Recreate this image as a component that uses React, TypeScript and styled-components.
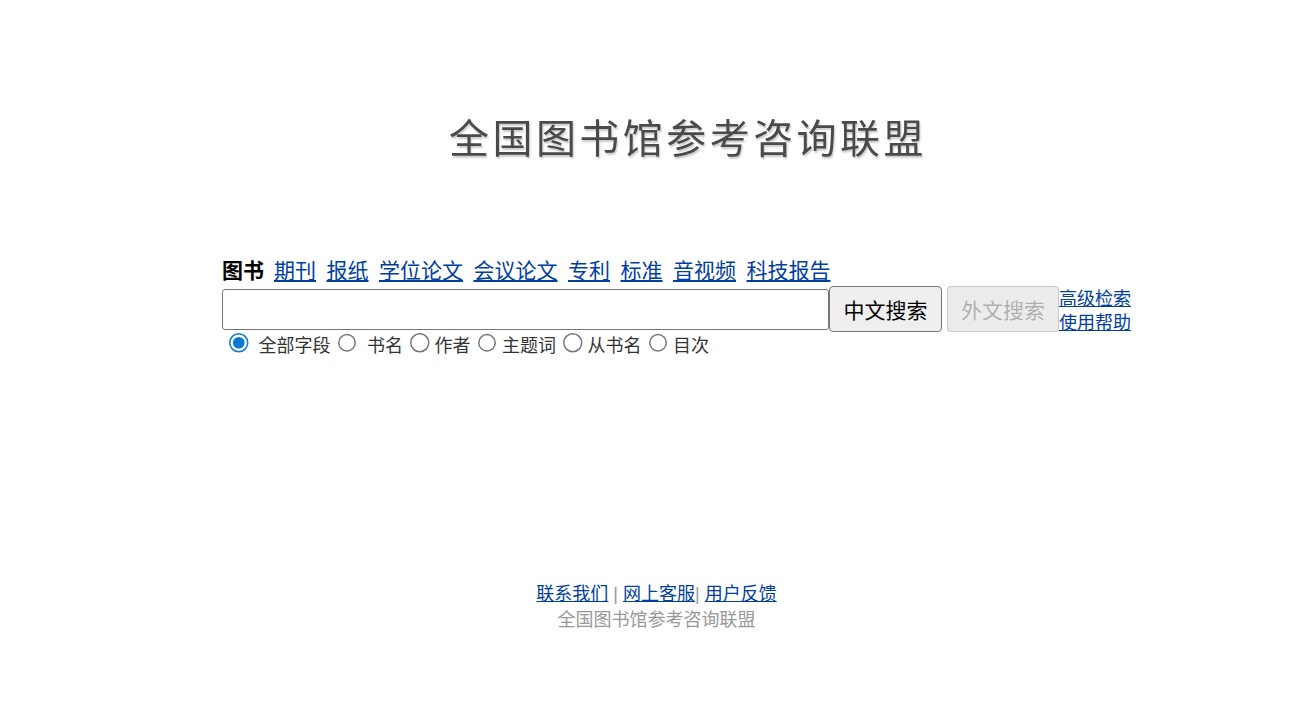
import React from 'react'
import styled, { createGlobalStyle } from 'styled-components'

const GlobalStyle = createGlobalStyle`
  html, body {
    margin: 0;
    padding: 0;
    background: #ffffff;
  }

  body {
    font-family: "Liberation Sans", "Noto Sans CJK SC", sans-serif;
    font-size: 18px;
    color: #333333;
  }
`

const Page = styled.div`
  width: 1305px;
  height: 714px;
  overflow: hidden;
  display: flex;
  flex-direction: column;
`

const LogoRow = styled.div`
  height: 257px;
  box-sizing: border-box;
  padding: 114px 0 0 449px;
`

const LogoText = styled.div`
  width: 490px;
  font-size: 40px;
  line-height: 50px;
  letter-spacing: 3.45px;
  white-space: nowrap;
  color: #4a4a4a;
  text-shadow: 1px 2px 2px rgba(0, 0, 0, 0.22);
  filter: blur(0.7px);
`

const SearchBox = styled.form`
  margin: 0 0 0 222px;
  width: 930px;
`

const TabRow = styled.div`
  display: flex;
  gap: 10.5px;
  font-size: 21px;
  line-height: 28px;
  height: 29px;
`

const ActiveTab = styled.strong`
  margin-right: -0.5px;
  color: #000000;
  font-weight: 700;
`

const Link = styled.a`
  color: #003ea0;
  text-decoration: underline;
`

const InputRow = styled.div`
  display: flex;
  align-items: center;
  height: 46px;
`

const QueryInput = styled.input`
  box-sizing: border-box;
  width: 607px;
  height: 41px;
  border: 1px solid #767676;
  border-radius: 3px;
  background: #ffffff;
  padding: 1px 3px;
  outline: none;
`

const SearchButton = styled.button<{ $gap?: number }>`
  box-sizing: border-box;
  width: ${p => (p.$gap ? 112 : 113)}px;
  height: 46px;
  margin-left: ${p => p.$gap || 0}px;
  padding: 0;
  border: 1px solid #767676;
  border-radius: 4px;
  background: #efefef;
  color: #000000;
  font-family: inherit;
  font-size: 21px;

  &:disabled {
    border-color: rgba(118, 118, 118, 0.3);
    background: #ececec;
    color: rgba(16, 16, 16, 0.3);
  }
`

const SideLinks = styled.div`
  display: flex;
  flex-direction: column;
  padding-top: 4px;
  font-size: 18px;
  line-height: 24px;
`

const FieldRow = styled.div`
  display: flex;
  align-items: center;
  height: 26px;
  padding-left: 7px;
  color: #333333;
`

const FieldRadio = styled.input`
  zoom: 1.5;
  width: 13px;
  height: 13px;
  margin: 0 0 3px;
  flex: none;
  accent-color: #0a78d6;
`

const FieldLabel = styled.label<{ $pad: number; $after: number }>`
  padding-top: 2px;
  padding-left: ${p => p.$pad}px;
  margin-right: ${p => p.$after}px;
  line-height: 24px;
`

const Footer = styled.footer`
  margin-top: 223px;
  padding-left: 8px;
  text-align: center;
  line-height: 26px;
  color: #999999;
`

const fields = [
  { name: '全部字段', pad: 10, after: 7, checked: true },
  { name: '书名', pad: 10, after: 7 },
  { name: '作者', pad: 5, after: 7 },
  { name: '主题词', pad: 5, after: 7 },
  { name: '从书名', pad: 5, after: 7 },
  { name: '目次', pad: 5, after: 0 }
]

const tabs = ['期刊', '报纸', '学位论文', '会议论文', '专利', '标准', '音视频', '科技报告']

export default function App() {
  return (
    <Page>
      <GlobalStyle />
      <LogoRow>
        <LogoText>全国图书馆参考咨询联盟</LogoText>
      </LogoRow>
      <SearchBox onSubmit={e => e.preventDefault()}>
        <TabRow>
          <ActiveTab>图书</ActiveTab>
          {tabs.map(tab => (
            <Link href="#" key={tab}>{tab}</Link>
          ))}
        </TabRow>
        <InputRow>
          <QueryInput type="text" />
          <SearchButton type="submit">中文搜索</SearchButton>
          <SearchButton type="button" $gap={5} disabled>外文搜索</SearchButton>
          <SideLinks>
            <Link href="#">高级检索</Link>
            <Link href="#">使用帮助</Link>
          </SideLinks>
        </InputRow>
        <FieldRow>
          {fields.map(field => (
            <React.Fragment key={field.name}>
              <FieldRadio type="radio" name="field" defaultChecked={field.checked} />
              <FieldLabel $pad={field.pad} $after={field.after}>{field.name}</FieldLabel>
            </React.Fragment>
          ))}
        </FieldRow>
      </SearchBox>
      <Footer>
        <div>
          <Link href="#">联系我们</Link> | <Link href="#">网上客服</Link>| <Link href="#">用户反馈</Link>
        </div>
        <div>全国图书馆参考咨询联盟</div>
      </Footer>
    </Page>
  )
}
